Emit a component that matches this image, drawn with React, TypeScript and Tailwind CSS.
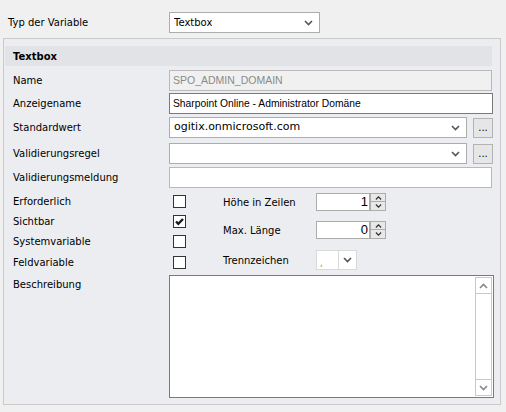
import React from 'react'

// ── small drawings ───────────────────────────────────────────────────────────

function Chevron({ up = false, className = '' }: { up?: boolean; className?: string }) {
  return (
    <svg width="9" height="6" viewBox="0 0 9 6" className={className}>
      <path
        d={up ? 'M1 5 L4.5 1.5 L8 5' : 'M1 1 L4.5 4.5 L8 1'}
        fill="none"
        stroke="currentColor"
        strokeWidth="1.6"
      />
    </svg>
  )
}

function Check() {
  return (
    <svg width="11" height="11" viewBox="0 0 11 11">
      <path d="M2 5.5 L4.3 7.8 L9 3" fill="none" stroke="#1a1a1a" strokeWidth="2.4" />
    </svg>
  )
}

// ── controls ─────────────────────────────────────────────────────────────────

function Combo({ value, width, className = '' }: { value: string; width: string; className?: string }) {
  return (
    <div
      className={`flex h-[21px] items-center justify-between border border-[#adadad] bg-white pl-[4px] pr-[6px] ${width} ${className}`}
    >
      <span className="truncate">{value}</span>
      <Chevron className="text-[#555]" />
    </div>
  )
}

function DotsButton() {
  return (
    <div className="flex h-[20px] w-[20px] items-end justify-center border border-[#b3b3b3] bg-[#e6e6e6] pb-[4px] text-[10px] leading-none">
      ...
    </div>
  )
}

function Checkbox({ checked = false }: { checked?: boolean }) {
  return (
    <div className="flex h-[13px] w-[13px] items-center justify-center border border-[#333] bg-white">
      {checked && <Check />}
    </div>
  )
}

function Spinner({ value }: { value: string }) {
  return (
    <div className="flex h-[18px] w-[70px]">
      <div className="flex h-full w-[54px] items-center justify-end border border-[#acacac] bg-white pr-[1px] font-['Liberation_Sans',sans-serif] text-[13px]">
        {value}
      </div>
      <div className="flex h-full w-[16px] flex-col">
        <div className="flex h-[9px] items-center justify-center border border-[#acacac] bg-[#e8e8e8] text-[#333]">
          <Chevron up className="scale-75" />
        </div>
        <div className="flex h-[9px] items-center justify-center border border-t-0 border-[#acacac] bg-[#e8e8e8] text-[#333]">
          <Chevron className="scale-75" />
        </div>
      </div>
    </div>
  )
}

function Row({ label, children, mt }: { label: string; children: React.ReactNode; mt: string }) {
  return (
    <div className={`flex h-[21px] items-center ${mt}`}>
      <div className="w-[156px] shrink-0">{label}</div>
      {children}
    </div>
  )
}

// ── App ──────────────────────────────────────────────────────────────────────

export default function App() {
  return (
    <div className="h-[412px] w-[506px] overflow-hidden bg-[#f0f0f0] font-['DejaVu_Sans',sans-serif] text-[10px] text-black">
      {/* Typ der Variable */}
      <div className="flex items-center pl-[8px] pt-[12px]">
        <div className="w-[161px]">Typ der Variable</div>
        <Combo value="Textbox" width="w-[151px]" />
      </div>

      {/* group */}
      <div className="ml-[3px] mt-[5px] h-[367px] w-[498px] border border-[#cacaca] bg-[#ecedf0] pt-[7px]">
        <div className="ml-[1px] flex h-[20px] w-[487px] items-center bg-[#e2e3e7] pl-[8px] font-bold">
          Textbox
        </div>

        <div className="pl-[9px]">
          <Row label="Name" mt="mt-[4px]">
            <div className="flex h-[21px] w-[323px] items-center border border-[#b9b9b9] bg-[#f0f0f0] pl-[3px] font-['Liberation_Sans',sans-serif] text-[10.5px] text-[#8a8a8a]">
              SPO_ADMIN_DOMAIN
            </div>
          </Row>
          <Row label="Anzeigename" mt="mt-[2px]">
            <div className="flex h-[21px] w-[324px] items-center border border-[#7a7a7a] bg-white pl-[3px] font-['Liberation_Sans',sans-serif] text-[10.3px]">
              Sharpoint Online - Administrator Domäne
            </div>
          </Row>
          <Row label="Standardwert" mt="mt-[3px]">
            <Combo value="ogitix.onmicrosoft.com" width="w-[298px]" className="text-[11px]" />
            <div className="ml-[6px]">
              <DotsButton />
            </div>
          </Row>
          <Row label="Validierungsregel" mt="mt-[5px]">
            <Combo value="" width="w-[298px]" />
            <div className="ml-[6px]">
              <DotsButton />
            </div>
          </Row>
          <Row label="Validierungsmeldung" mt="mt-[3px]">
            <div className="h-[21px] w-[323px] border border-[#b9b9b9] bg-white" />
          </Row>

          {/* flags */}
          <div className="mt-[3px] flex">
            <div className="w-[160px] shrink-0">
              <div className="flex h-[20px] items-center">Erforderlich</div>
              <div className="flex h-[20px] items-center">Sichtbar</div>
              <div className="flex h-[21px] items-center">Systemvariable</div>
              <div className="flex h-[20px] items-center">Feldvariable</div>
            </div>
            <div className="w-[50px] shrink-0">
              <div className="flex h-[20px] items-center"><Checkbox /></div>
              <div className="flex h-[20px] items-center"><Checkbox checked /></div>
              <div className="flex h-[21px] items-center"><Checkbox /></div>
              <div className="flex h-[20px] items-center"><Checkbox /></div>
            </div>
            <div className="flex flex-col">
              <div className="mt-[2px] flex h-[18px] items-center">
                <div className="w-[93px]">Höhe in Zeilen</div>
                <Spinner value="1" />
              </div>
              <div className="mt-[10px] flex h-[18px] items-center">
                <div className="w-[93px]">Max. Länge</div>
                <Spinner value="0" />
              </div>
              <div className="mt-[11px] flex h-[20px] items-center">
                <div className="w-[93px]">Trennzeichen</div>
                <div className="flex h-[20px] w-[41px] border border-[#d9d9d9] bg-white">
                  <div className="relative w-[22px] border-r border-[#d9d9d9]">
                    <span className="absolute bottom-[1px] left-[3px] text-[9px] leading-none text-[#c8703a]">,</span>
                  </div>
                  <div className="flex flex-1 items-center justify-center text-[#555]">
                    <Chevron />
                  </div>
                </div>
              </div>
            </div>
          </div>

          {/* Beschreibung */}
          <div className="mt-[3px] flex">
            <div className="w-[156px] shrink-0 pt-[2px]">Beschreibung</div>
            <div className="flex h-[123px] w-[325px] justify-end border border-[#7a7a7a] bg-white p-[1px]">
              <div className="flex w-[17px] flex-col border border-[#c8c8c8]">
                <div className="flex h-[16px] items-center justify-center border-b border-[#c8c8c8] text-[#888]">
                  <Chevron up />
                </div>
                <div className="flex-1" />
                <div className="flex h-[16px] items-center justify-center border-t border-[#c8c8c8] text-[#888]">
                  <Chevron />
                </div>
              </div>
            </div>
          </div>
        </div>
      </div>
    </div>
  )
}
